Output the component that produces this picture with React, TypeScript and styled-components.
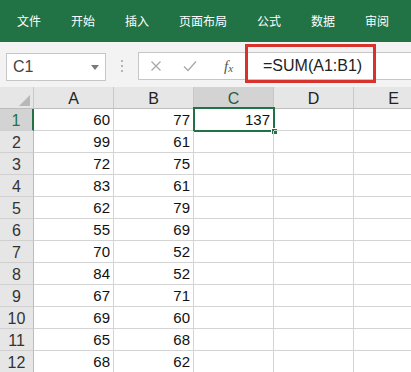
import React, { FC } from 'react';
import styled, { createGlobalStyle, css } from 'styled-components';

const GlobalStyle = createGlobalStyle`
  body {
    margin: 0;
    background: #ffffff;
    font-family: 'Liberation Sans', 'Noto Sans CJK SC', sans-serif;
  }
`;

const tabs = ['文件', '开始', '插入', '页面布局', '公式', '数据', '审阅'];
const colA = [60, 99, 72, 83, 62, 55, 70, 84, 67, 69, 65, 68];
const colB = [77, 61, 75, 61, 79, 69, 52, 52, 71, 60, 68, 62];
const columns = ['A', 'B', 'C', 'D', 'E'];

const App: FC = () => (
  <Page>
    <GlobalStyle />
    <Ribbon>
      {tabs.map(tab => (
        <Tab key={tab}>{tab}</Tab>
      ))}
    </Ribbon>

    <FormulaBar>
      <NameBox>
        <span>C1</span>
        <DropArrow />
      </NameBox>
      <Grip>
        <i />
        <i />
        <i />
      </Grip>
      <FormulaBox>
        <IconSlot>
          <svg width="12" height="12" viewBox="0 0 12 12">
            <path d="M1.5 1.5 L10.5 10.5 M10.5 1.5 L1.5 10.5" stroke="#a8a8a8" strokeWidth="1.3" fill="none" />
          </svg>
        </IconSlot>
        <IconSlot>
          <svg width="14" height="12" viewBox="0 0 14 12">
            <path d="M1 6.5 L5 10.5 L13 1.5" stroke="#a8a8a8" strokeWidth="1.3" fill="none" />
          </svg>
        </IconSlot>
        <FxLabel>
          f<sub>x</sub>
        </FxLabel>
        <FormulaText>=SUM(A1:B1)</FormulaText>
      </FormulaBox>
      <Highlight />
    </FormulaBar>

    <Sheet>
      <Corner>
        <svg width="11" height="11" viewBox="0 0 11 11">
          <polygon points="11,0 11,11 0,11" fill="#b8b8b8" />
        </svg>
      </Corner>
      {columns.map(col => (
        <ColHeader key={col} active={col === 'C'}>
          {col}
        </ColHeader>
      ))}

      {colA.map((a, i) => (
        <React.Fragment key={i}>
          <RowHeader active={i === 0}>{i + 1}</RowHeader>
          <Cell>{a}</Cell>
          <Cell>{colB[i]}</Cell>
          <Cell selected={i === 0}>{i === 0 ? a + colB[i] : ''}</Cell>
          <Cell />
          <Cell />
        </React.Fragment>
      ))}
    </Sheet>
  </Page>
);

export default App;

const Page = styled.div`
  width: 411px;
  height: 372px;
  overflow: hidden;
`;

const Ribbon = styled.div`
  height: 42px;
  background: #217346;
  display: flex;
  align-items: center;
  gap: 30px;
  padding: 0 0 2px 17px;
  box-sizing: border-box;
`;

const Tab = styled.div`
  color: #ffffff;
  font-size: 12px;
  font-family: 'Noto Sans CJK SC', sans-serif;
  white-space: nowrap;
`;

const FormulaBar = styled.div`
  position: relative;
  height: 45px;
  background: #f3f3f3;
  display: flex;
  align-items: flex-start;
  padding: 10px 0 0 6px;
  box-sizing: border-box;
`;

const NameBox = styled.div`
  width: 100px;
  height: 28px;
  margin-top: 1px;
  box-sizing: border-box;
  background: #ffffff;
  border: 1px solid #c6c6c6;
  display: flex;
  align-items: center;
  justify-content: space-between;
  padding: 0 6px 0 6px;
  font-size: 16px;
  color: #444444;
`;

const DropArrow = styled.div`
  width: 0;
  height: 0;
  border-left: 4px solid transparent;
  border-right: 4px solid transparent;
  border-top: 5px solid #7a7a7a;
`;

const Grip = styled.div`
  width: 32px;
  height: 28px;
  display: flex;
  flex-direction: column;
  align-items: center;
  justify-content: center;
  gap: 3px;

  i {
    display: block;
    width: 2px;
    height: 2px;
    background: #b4b4b4;
  }
`;

const FormulaBox = styled.div`
  flex: 1;
  height: 28px;
  box-sizing: border-box;
  background: #ffffff;
  border: 1px solid #c6c6c6;
  border-right: none;
  display: flex;
  align-items: center;
  padding-left: 11px;
`;

const IconSlot = styled.div`
  width: 33px;
  display: flex;
  align-items: center;
  justify-content: flex-start;
`;

const FxLabel = styled.div`
  width: 39px;
  margin-left: 8px;
  font-family: 'Liberation Serif', serif;
  font-style: italic;
  font-size: 15px;
  color: #555555;

  sub {
    font-size: 11px;
    vertical-align: -1px;
  }
`;

const FormulaText = styled.div`
  font-size: 16px;
  color: #222222;
  white-space: nowrap;
`;

const Highlight = styled.div`
  position: absolute;
  left: 245px;
  top: 2px;
  width: 131px;
  height: 39px;
  box-sizing: border-box;
  border: 3px solid #d8322c;
`;

const Sheet = styled.div`
  display: grid;
  grid-template-columns: 34px repeat(5, 80px);
  grid-auto-rows: 22px;
`;

const headerBase = css`
  background: #e6e6e6;
  box-sizing: border-box;
  border-right: 1px solid #c8c8c8;
  border-bottom: 1px solid #bcbcbc;
  display: flex;
  align-items: center;
  justify-content: center;
  font-size: 16px;
`;

const Corner = styled.div`
  ${headerBase};
  align-items: flex-end;
  justify-content: flex-end;
  padding: 0 3px 2px 0;
`;

interface ActiveProps {
  active?: boolean;
}

const ColHeader = styled.div<ActiveProps>`
  ${headerBase};
  color: ${({ active }) => (active ? '#2a5a3e' : '#222222')};
  background: ${({ active }) => (active ? '#d3d3d3' : '#e6e6e6')};
  border-bottom: ${({ active }) => (active ? '2px solid #217346' : '1px solid #bcbcbc')};
  padding-top: 3px;
`;

const RowHeader = styled.div<ActiveProps>`
  ${headerBase};
  color: ${({ active }) => (active ? '#217346' : '#333333')};
  background: ${({ active }) => (active ? '#d3d3d3' : '#e6e6e6')};
  border-right: ${({ active }) => (active ? '2px solid #217346' : '1px solid #bcbcbc')};
  border-bottom-color: #d0d0d0;
  padding-top: 2px;
`;

interface CellProps {
  selected?: boolean;
}

const Cell = styled.div<CellProps>`
  position: relative;
  box-sizing: border-box;
  border-right: 1px solid #d4d4d4;
  border-bottom: 1px solid #d4d4d4;
  display: flex;
  align-items: flex-end;
  justify-content: flex-end;
  padding: 0 3px 2px 0;
  font-size: 15px;
  color: #111111;

  ${({ selected }) =>
    selected &&
    css`
      &::before {
        content: '';
        position: absolute;
        left: -1px;
        top: -2px;
        right: -2px;
        bottom: -2px;
        border: 2px solid #217346;
      }

      &::after {
        content: '';
        position: absolute;
        right: -5px;
        bottom: -5px;
        width: 5px;
        height: 5px;
        background: #217346;
        border: 1px solid #ffffff;
      }
    `}
`;
